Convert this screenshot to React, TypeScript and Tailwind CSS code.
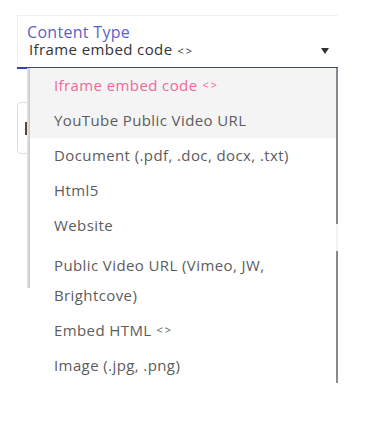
const font = { fontFamily: '"Open Sans", "Liberation Sans", sans-serif' };

const Brackets = () => <span className="ml-[5px] text-[11px] tracking-[2px]">&lt;&gt;</span>;

export default function App() {
  return (
    <div className="h-[430px] w-[384px] bg-white" style={font}>
      <div className="relative ml-[17px] w-[321px] pt-[15px]">
        {/* select field */}
        <div className="flex h-[52px] items-start border-l border-t border-[#f0f0f0] pl-[9px] pr-[8px]">
          <div className="flex flex-1 flex-col gap-[1px] pt-[8px]">
            <div className="text-[16px] leading-[16px] tracking-[0.3px] text-[#5b62c7]">Content Type</div>
            <div className="pl-[2px] text-[15px] leading-[16px] tracking-[0.4px] text-[#333]">
              Iframe embed code<Brackets />
            </div>
          </div>
          <svg width="8" height="6" viewBox="0 0 8 6" className="mt-[32px] mr-[1px]">
            <path d="M0 0h8L4 6z" fill="#333" />
          </svg>
        </div>
        <div className="h-[2px] bg-[#3343b3]" />

        {/* field underneath the menu */}
        <div className="mt-[33px] flex h-[52px] w-[40px] items-center rounded-l-[4px] border border-[#dedede] pl-[7px]">
          <div className="h-[13px] w-[2px] bg-[#5a4636]" />
        </div>

        {/* dropdown menu */}
        <div className="absolute left-[10px] top-[68px] flex h-[315px] w-[311px] bg-white">
          <div className="flex w-[3px] flex-col">
            <div className="h-[220px] bg-gradient-to-r from-[#e6e6e6] to-[#c8c8c8]" />
          </div>
          <div className="flex flex-1 flex-col text-[15px] tracking-[0.4px] text-[#5c5c5c]">
            <div className="flex h-[35px] items-center bg-[#f4f4f4] pl-[24px] text-[#f2679b]">
              Iframe embed code<Brackets />
            </div>
            <div className="flex h-[35px] items-center bg-[#f4f4f4] pl-[24px]">YouTube Public Video URL</div>
            <div className="flex h-[35px] items-center pl-[24px]">Document (.pdf, .doc, docx, .txt)</div>
            <div className="flex h-[35px] items-center pl-[24px]">Html5</div>
            <div className="flex h-[35px] items-center pl-[24px]">Website</div>
            <div className="w-[275px] pb-[3px] pl-[24px] pt-[7px] leading-[30px]">
              Public Video URL (Vimeo, JW, Brightcove)
            </div>
            <div className="flex h-[35px] items-center pl-[24px]">
              Embed HTML<Brackets />
            </div>
            <div className="flex h-[35px] items-center pl-[24px]">Image (.jpg, .png)</div>
          </div>
          <div className="flex w-[2px] flex-col">
            <div className="h-[156px] bg-[#8a8a8a]" />
            <div className="h-[27px] bg-[#f2f2f2]" />
            <div className="flex-1 bg-[#8a8a8a]" />
          </div>
        </div>
      </div>
    </div>
  );
}
